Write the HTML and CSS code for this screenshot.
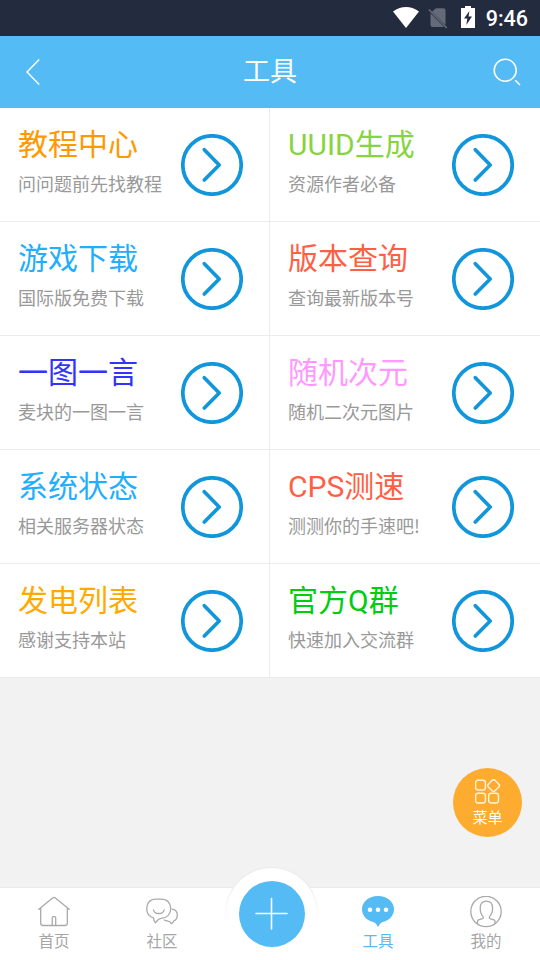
FILE: index.html
```html
<!DOCTYPE html>
<html lang="zh-CN">
<head>
    <meta charset="UTF-8">
    <meta name="viewport" content="width=device-width, initial-scale=1.0">
    <title>工具</title>
    <link rel="stylesheet" href="styles.css">
</head>
<body>

    <!-- 圆形箭头，列表里重复使用 -->
    <svg class="symbols" aria-hidden="true">
        <symbol id="arrow" viewBox="0 0 62 62">
            <circle cx="31" cy="31" r="29.2" stroke-width="3.7"/>
            <path d="M23.3 15.7 L38.2 31 L23.3 46" stroke-width="3.7" stroke-linecap="round" stroke-linejoin="round"/>
        </symbol>
    </svg>

    <div class="status-bar">
        <svg class="wifi" width="26" height="21" viewBox="0 0 26 21"><path d="M0 4.4 Q13 -4.4 26 4.4 L13 21 Z" fill="#fff"/></svg>
        <svg class="sim" width="20" height="21" viewBox="0 0 20 21">
            <path d="M8 0.2 H15.5 Q17.5 0.2 17.5 2.2 V17 L4 3.6 Z M2.5 5.2 L16 19 H4.5 Q2.5 19 2.5 17 Z" fill="#646a77"/>
            <path d="M0.8 1.5 L18.8 20" stroke="#646a77" stroke-width="1.6"/>
        </svg>
        <svg class="battery" width="14" height="22" viewBox="0 0 14 22">
            <path d="M4 0 H10 V2 H14 V22 H0 V2 H4 Z" fill="#fff"/>
            <path d="M8.4 5 L3 12.6 H6.3 L5.3 19 L11 10.6 H7.6 Z" fill="#232b3e"/>
        </svg>
        <span class="time">9:46</span>
    </div>

    <header class="header">
        <svg width="14" height="26" viewBox="0 0 14 26" fill="none" stroke="#fff" stroke-width="1.4"><path d="M13.2 0.6 L1 13 L13.2 25.4"/></svg>
        <h1>工具</h1>
        <svg width="28" height="28" viewBox="0 0 28 28" fill="none" stroke="#fff" stroke-width="1.5"><circle cx="12.2" cy="12.2" r="11"/><path d="M22.2 22.2 L27 27"/></svg>
    </header>

    <main class="tools">
        <a class="tool">
            <div class="tool-text"><h2 class="orange">教程中心</h2><p>问问题前先找教程</p></div>
            <svg class="arrow"><use href="#arrow"/></svg>
        </a>
        <a class="tool">
            <div class="tool-text"><h2 class="lime">UUID生成</h2><p>资源作者必备</p></div>
            <svg class="arrow"><use href="#arrow"/></svg>
        </a>
        <a class="tool">
            <div class="tool-text"><h2 class="sky">游戏下载</h2><p>国际版免费下载</p></div>
            <svg class="arrow"><use href="#arrow"/></svg>
        </a>
        <a class="tool">
            <div class="tool-text"><h2 class="tomato">版本查询</h2><p>查询最新版本号</p></div>
            <svg class="arrow"><use href="#arrow"/></svg>
        </a>
        <a class="tool">
            <div class="tool-text"><h2 class="blue">一图一言</h2><p>麦块的一图一言</p></div>
            <svg class="arrow"><use href="#arrow"/></svg>
        </a>
        <a class="tool">
            <div class="tool-text"><h2 class="pink">随机次元</h2><p>随机二次元图片</p></div>
            <svg class="arrow"><use href="#arrow"/></svg>
        </a>
        <a class="tool">
            <div class="tool-text"><h2 class="sky">系统状态</h2><p>相关服务器状态</p></div>
            <svg class="arrow"><use href="#arrow"/></svg>
        </a>
        <a class="tool">
            <div class="tool-text"><h2 class="tomato">CPS测速</h2><p>测测你的手速吧!</p></div>
            <svg class="arrow"><use href="#arrow"/></svg>
        </a>
        <a class="tool">
            <div class="tool-text"><h2 class="amber">发电列表</h2><p>感谢支持本站</p></div>
            <svg class="arrow"><use href="#arrow"/></svg>
        </a>
        <a class="tool">
            <div class="tool-text"><h2 class="green">官方Q群</h2><p>快速加入交流群</p></div>
            <svg class="arrow"><use href="#arrow"/></svg>
        </a>
    </main>

    <!-- 悬浮菜单 -->
    <div class="menu-btn">
        <svg width="26" height="26" viewBox="0 0 26 26" fill="none" stroke="#fff" stroke-opacity="0.85" stroke-width="1.4">
            <rect x="0.6" y="1.2" width="9.8" height="9.8" rx="2.4"/>
            <rect x="13.9" y="1.9" width="9.4" height="9.4" rx="2" transform="rotate(45 18.6 6.6)"/>
            <rect x="0.6" y="14.2" width="9.8" height="9.8" rx="2.4"/>
            <rect x="13.7" y="14.2" width="9.8" height="9.8" rx="2.4"/>
        </svg>
        <span>菜单</span>
    </div>

    <nav class="tabbar">
        <a class="tab">
            <svg width="32" height="32" viewBox="0 0 32 32" fill="none" stroke="#aaa" stroke-width="1.3" stroke-linejoin="round" stroke-linecap="round">
                <path d="M0.8 13.2 L14.6 2 Q16 0.9 17.4 2 L31.2 13.2 M2.7 12.2 V26.9 Q2.7 29.5 5.3 29.5 H26.7 Q29.3 29.5 29.3 26.9 V12.2 M0.8 13.2 H2.7 M31.2 13.2 H29.3"/>
                <path d="M14.3 29.5 V21.7 Q14.3 20.7 15.3 20.7 H16.7 Q17.7 20.7 17.7 21.7 V29.5"/>
            </svg>
            <span>首页</span>
        </a>
        <a class="tab">
            <svg width="32" height="32" viewBox="0 0 32 32" fill="none" stroke="#aaa" stroke-width="1.3" stroke-linejoin="round" stroke-linecap="round">
                <path d="M10 3.1 H15 C21 3.1 24.8 7 24.8 12.6 C24.8 18.1 21 21.9 15.5 22.3 Q12.2 22.6 9.5 26.8 Q7.8 24.8 7.4 21.8 C3 20.6 0.7 17.1 0.7 12.6 C0.7 7 4 3.1 10 3.1 Z"/>
                <path d="M7.5 13.8 Q8.2 17.5 12.8 17.5 Q17.4 17.5 18.1 13.8"/>
                <path d="M26.4 13.1 C29.8 13.8 31.3 16.4 31.3 19 C31.3 21.8 29.8 24.1 28 24.7 Q27.2 26.4 25.4 27.6 Q24 25.3 22 25.2 Q19.4 25 18.4 24.1"/>
            </svg>
            <span>社区</span>
        </a>
        <a class="tab">
            <div class="publish">
                <svg width="66" height="66" viewBox="0 0 66 66"><circle cx="33" cy="33" r="33" fill="#54bbf5"/><path d="M32.5 17.5 V48 M17 32.5 H48" stroke="#fff" stroke-width="1.6" stroke-linecap="round"/></svg>
            </div>
        </a>
        <a class="tab active">
            <svg width="32" height="32" viewBox="0 0 32 32">
                <path d="M16 0 C25 0 32 5.7 32 13.2 C32 19.7 27 24.7 20 26.3 Q18 27.1 16 31 Q14 27.1 12 26.3 C5 24.7 0 19.7 0 13.2 C0 5.7 7 0 16 0 Z" fill="#54bbf5"/>
                <circle cx="8" cy="13.7" r="2.3" fill="#fff"/><circle cx="16" cy="13.7" r="2.3" fill="#fff"/><circle cx="24" cy="13.7" r="2.3" fill="#fff"/>
            </svg>
            <span>工具</span>
        </a>
        <a class="tab">
            <svg width="32" height="32" viewBox="0 0 32 32" fill="none" stroke="#aaa" stroke-width="1.3" stroke-linejoin="round">
                <circle cx="16" cy="15.5" r="15.2"/>
                <path d="M7.5 28 V25.3 Q7.5 24.3 8.5 23.9 L12.6 22.6 Q13.6 22.1 13.2 20.9 C11 18.5 10.2 15.5 10.2 12.3 C10.2 7.7 12 5.2 16.4 5.2 C20.8 5.2 22.6 7.7 22.6 12.3 C22.6 15.5 21.6 18.5 19.4 20.9 Q19 22.1 20 22.6 L24 23.9 Q25 24.3 25 25.3 V27.7"/>
            </svg>
            <span>我的</span>
        </a>
    </nav>

</body>
</html>
```
FILE: styles.css
```css
* {
    box-sizing: border-box;
}
body {
    font-family: Roboto, "Noto Sans CJK SC", sans-serif;
    background-color: #f2f2f2;
    margin: 0;
    height: 960px;
    overflow: hidden;
}
h1, h2, p {
    margin: 0;
    font-weight: 400;
}
svg {
    display: block;
    flex: none;
}
.symbols {
    display: none;
}
.status-bar {
    display: flex;
    justify-content: flex-end;
    height: 36px;
    padding: 6px 12px 0 0;
    background-color: #232b3e;
    color: #fff;
}
.status-bar .sim {
    margin: 2px 0 0 9px;
}
.status-bar .wifi {
    margin-top: 1px;
}
.status-bar .battery {
    margin-left: 13px;
}
.time {
    margin-left: 11px;
    font-size: 21.5px;
    font-weight: 500;
    line-height: 26px;
}
.header {
    display: flex;
    justify-content: space-between;
    align-items: center;
    height: 72px;
    padding: 0 19px 0 26px;
    background-color: #54bbf5;
    color: #fff;
}
.header h1 {
    font-size: 27px;
    line-height: 40px;
    margin: 0 0 1px 7px;
}
.tools {
    display: grid;
    grid-template-columns: 1fr 1fr;
    background-color: #fff;
}
.tool {
    display: flex;
    justify-content: space-between;
    height: 114px;
    padding: 0 26px 0 18px;
    border-bottom: 1px solid #ececec;
}
.tool:nth-child(odd) {
    border-right: 1px solid #ececec;
}
.tool-text {
    padding-top: 15px;
    white-space: nowrap;
}
.tool h2 {
    font-size: 30px;
    line-height: 44px;
}
.tool p {
    margin-top: 3px;
    font-family: "Noto Sans CJK SC", sans-serif;
    font-size: 18px;
    line-height: 26px;
    color: #999;
}
.arrow {
    width: 62px;
    height: 62px;
    margin-top: 26px;
    fill: none;
    stroke: #1296db;
}
.orange { color: #ff9900; }
.lime { color: #88d43f; }
.sky { color: #22aeff; }
.tomato { color: #ff5f45; }
.blue { color: #3333ff; }
.pink { color: #ff99ff; }
.amber { color: #ffaa00; }
.green { color: #00cc11; }

.menu-btn {
    position: fixed;
    right: 18px;
    bottom: 123px;
    display: flex;
    flex-direction: column;
    align-items: center;
    width: 69px;
    height: 69px;
    padding-top: 11px;
    border-radius: 50%;
    background-color: #fdac2f;
    color: #fff;
    font-size: 15px;
    line-height: 26px;
}
.tabbar {
    position: fixed;
    left: 0;
    right: 0;
    bottom: 0;
    display: flex;
    height: 73px;
    border-top: 1px solid #ebebeb;
    background-color: #fff;
}
.tab {
    flex: 1;
    display: flex;
    flex-direction: column;
    align-items: center;
    padding-top: 8px;
    font-size: 15.5px;
    line-height: 24px;
    color: #a5a5a5;
}
.tab span {
    margin-top: 2px;
}
.tab.active {
    color: #54bbf5;
}
.publish {
    position: absolute;
    top: -21px;
    left: 225px;
    display: flex;
    justify-content: center;
    width: 93px;
    height: 93px;
    padding-top: 13px;
    border-radius: 50%;
    /* 圆弧边线向下渐隐 */
    background: linear-gradient(#fff, #fff) padding-box, linear-gradient(#ebebeb 20%, #fff 60%) border-box;
    border: 1px solid transparent;
}
```
